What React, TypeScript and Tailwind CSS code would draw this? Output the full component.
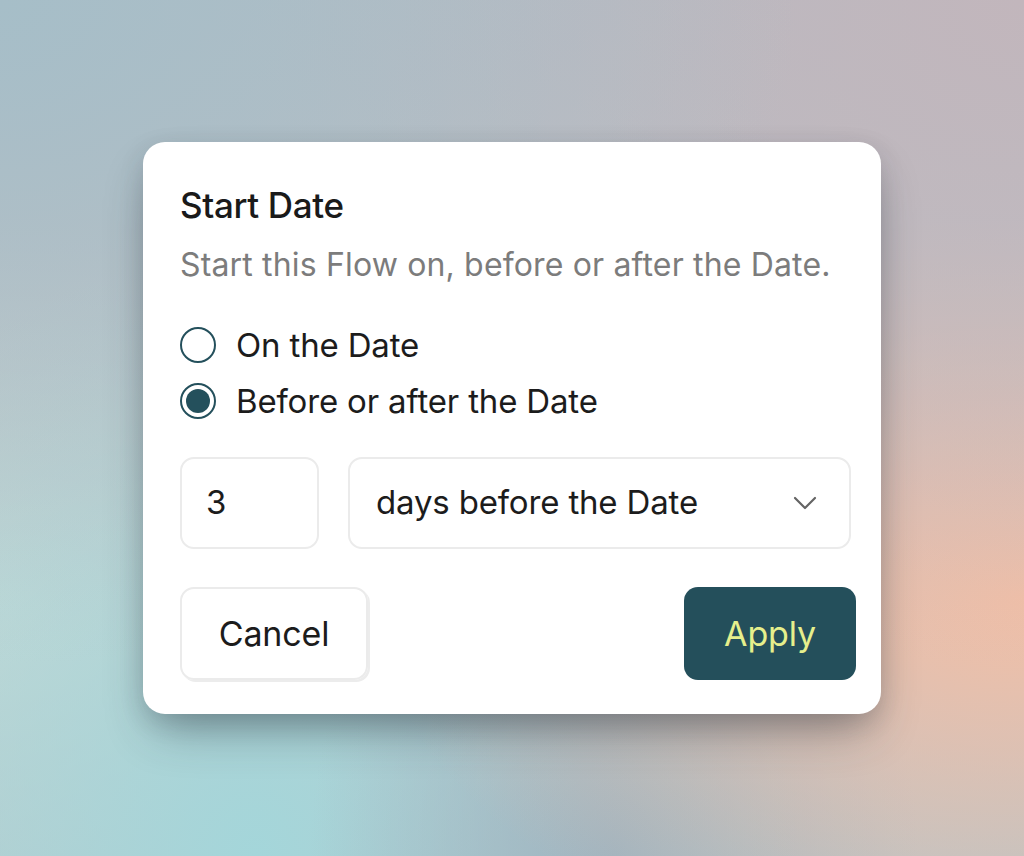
import { useState } from "react";

const FONT = { fontFamily: "Inter, 'Noto Sans', sans-serif" };

function Radio({ checked, label, onClick }: { checked: boolean; label: string; onClick: () => void }) {
  return (
    <button onClick={onClick} className="flex items-center gap-[20px] text-left">
      <span className="flex h-[36px] w-[36px] items-center justify-center rounded-full border-2 border-[#24505c]">
        {checked && <span className="h-[24px] w-[24px] rounded-full bg-[#24505c]" />}
      </span>
      <span className="text-[33px] leading-[36px] tracking-[-0.005em] text-[#1c1c1c]">{label}</span>
    </button>
  );
}

export default function App() {
  const [mode, setMode] = useState<"on" | "offset">("offset");

  return (
    <div className="relative flex h-[856px] w-full items-start justify-center overflow-hidden pt-[142px]" style={FONT}>
      <div className="absolute inset-0 bg-[radial-gradient(ellipse_at_0%_0%,#a6bec8_0%,transparent_55%),radial-gradient(ellipse_at_100%_0%,#c2b6bc_0%,transparent_55%),radial-gradient(ellipse_at_100%_70%,#f2bfa6_0%,transparent_45%),radial-gradient(ellipse_at_60%_100%,#9fb4c0_0%,transparent_35%),radial-gradient(ellipse_at_25%_100%,#a4d6da_0%,transparent_50%),radial-gradient(ellipse_at_0%_70%,#c8dad6_0%,transparent_45%),linear-gradient(180deg,#b4bcc4_0%,#c6c2c4_60%,#b8c4c8_100%)]" />
      <div className="relative w-[738px] rounded-[22px] bg-white pb-[34px] pl-[37px] pr-[30px] pt-[43px] shadow-[0_24px_48px_-12px_rgba(40,50,60,0.45),0_8px_24px_rgba(40,50,60,0.15)]">
        <h1 className="text-[35px] font-medium leading-[40px] tracking-[-0.01em] text-[#1a1a1a]">Start Date</h1>
        <p className="mt-[20px] text-[32px] leading-[40px] tracking-[0.005em] text-[#7c7c7c]">
          Start this Flow on, before or after the Date.
        </p>

        <div className="mt-[42px] flex flex-col gap-[20px]">
          <Radio checked={mode === "on"} label="On the Date" onClick={() => setMode("on")} />
          <Radio checked={mode === "offset"} label="Before or after the Date" onClick={() => setMode("offset")} />
        </div>

        <div className="mt-[38px] flex gap-[29px]">
          <div className="flex h-[92px] w-[139px] items-center rounded-[14px] border-2 border-[#ebebeb] px-[24px] text-[33px] text-[#1c1c1c]">
            3
          </div>
          <div className="flex h-[92px] flex-1 items-center justify-between rounded-[14px] border-2 border-[#ebebeb] pl-[26px] pr-[32px] text-[33px] tracking-[-0.005em] text-[#1c1c1c]">
            <span>days before the Date</span>
            <svg width="24" height="14" viewBox="0 0 24 14" fill="none">
              <path d="M2 2l10 10L22 2" stroke="#646464" strokeWidth="2.2" strokeLinecap="round" strokeLinejoin="round" />
            </svg>
          </div>
        </div>

        <div className="mt-[38px] flex items-center justify-between">
          <button className="flex h-[93px] w-[188px] items-center justify-center rounded-[14px] border-2 border-[#ebebeb] text-[34px] tracking-[-0.005em] text-[#1c1c1c] shadow-[2px_2px_0_#ececec]">
            Cancel
          </button>
          <button className="-mr-[5px] flex h-[93px] w-[172px] items-center justify-center rounded-[14px] bg-[#244f5b] text-[34px] tracking-[-0.005em] text-[#e6ef8c]">
            Apply
          </button>
        </div>
      </div>
    </div>
  );
}
